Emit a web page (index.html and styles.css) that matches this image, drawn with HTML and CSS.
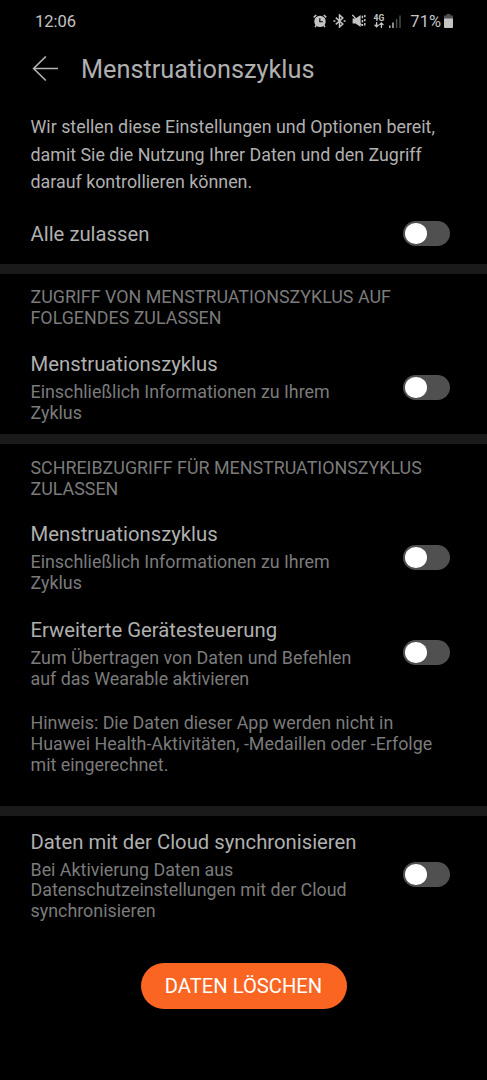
FILE: index.html
```
<!DOCTYPE html>
<html lang="de">
<head>
  <meta charset="UTF-8">
  <meta name="viewport" content="width=device-width, initial-scale=1">
  <title>Menstruationszyklus</title>
  <link rel="stylesheet" href="styles.css">
</head>
<body>
  <div class="statusbar">
    <span class="clock">12:06</span>
    <div class="status-icons">
      <svg class="icon-alarm" width="14" height="14" viewBox="0 0 14 14">
        <circle cx="7" cy="7.4" r="5.7" fill="#c4c4c4"/>
        <path d="M.7 3.4 3.3 1M13.3 3.4 10.7 1M3.2 11.3 2 13M10.8 11.3 12 13" stroke="#c4c4c4" stroke-width="1.5" fill="none"/>
        <path d="M6.8 4.2v3.6h3" stroke="#000" stroke-width="1.1" fill="none"/>
      </svg>
      <svg class="icon-bluetooth" width="13" height="14" viewBox="0 0 13 14">
        <path d="M2.8 3.6 9.8 10 6.5 13V1L9.8 4 2.8 10.4" stroke="#c4c4c4" stroke-width="1.5" fill="none"/>
        <path d="M.4 7h2M10.6 7h2" stroke="#c4c4c4" stroke-width="1.7"/>
      </svg>
      <svg class="icon-mute" width="14" height="14" viewBox="0 0 14 14">
        <path d="M.6 4.6h3L8.6 1v12L3.6 9.6h-3z" fill="#c4c4c4"/>
        <path d="M.4 1 9.8 11.4" stroke="#c4c4c4" stroke-width="1.3"/>
        <path d="M10.4 1.8v2.4M10.4 6v2.4M10.4 10v2M12.8 1v2.2M12.8 5v2.2M12.8 9v2.4" stroke="#c4c4c4" stroke-width="1.5" fill="none"/>
      </svg>
      <div class="network">
        <span>4G</span>
        <svg width="10" height="6" viewBox="0 0 10 6">
          <path d="M2.6 0v4.6M.6 2.8l2 2 2-2M7.4 6V1.2M5.4 3l2-2 2 2" stroke="#c4c4c4" stroke-width="1.3" fill="none"/>
        </svg>
      </div>
      <svg class="icon-signal" width="12" height="13" viewBox="0 0 12 13">
        <path d="M.8 10.5V13M4 7.5V13" stroke="#c4c4c4" stroke-width="1.4"/>
        <path d="M7.6 4V13M11 .5V13" stroke="#505050" stroke-width="1.4"/>
      </svg>
      <span class="percent">71%</span>
      <svg class="icon-battery" width="9" height="14" viewBox="0 0 9 14">
        <path d="M2.5 0h4v1.5H9V5H0V1.5h2.5z" fill="#505050"/>
        <path d="M0 4.5h9V13q0 1-1 1H1q-1 0-1-1z" fill="#c4c4c4"/>
      </svg>
    </div>
  </div>

  <header class="header">
    <svg width="27" height="26" viewBox="0 0 27 26">
      <path d="M13.8 .5 1.6 12.5l12.2 12M1.6 12.5H26" stroke="#b4b4b4" stroke-width="1.6" fill="none"/>
    </svg>
    <h1>Menstruationszyklus</h1>
  </header>

  <p class="intro">Wir stellen diese Einstellungen und Optionen bereit,<br>damit Sie die Nutzung Ihrer Daten und den Zugriff<br>darauf kontrollieren können.</p>

  <div class="row row-all">
    <div class="title">Alle zulassen</div>
    <div class="toggle"></div>
  </div>

  <section class="section">
    <h2>ZUGRIFF VON MENSTRUATIONSZYKLUS AUF<br>FOLGENDES ZULASSEN</h2>
    <div class="row">
      <div>
        <div class="title">Menstruationszyklus</div>
        <div class="caption">Einschließlich Informationen zu Ihrem<br>Zyklus</div>
      </div>
      <div class="toggle"></div>
    </div>
  </section>

  <section class="section">
    <h2>SCHREIBZUGRIFF FÜR MENSTRUATIONSZYKLUS<br>ZULASSEN</h2>
    <div class="row">
      <div>
        <div class="title">Menstruationszyklus</div>
        <div class="caption">Einschließlich Informationen zu Ihrem<br>Zyklus</div>
      </div>
      <div class="toggle"></div>
    </div>
    <div class="row">
      <div>
        <div class="title">Erweiterte Gerätesteuerung</div>
        <div class="caption">Zum Übertragen von Daten und Befehlen<br>auf das Wearable aktivieren</div>
      </div>
      <div class="toggle"></div>
    </div>
    <p class="note">Hinweis: Die Daten dieser App werden nicht in<br>Huawei Health-Aktivitäten, -Medaillen oder -Erfolge<br>mit eingerechnet.</p>
  </section>

  <section class="section section-cloud">
    <div class="row">
      <div>
        <div class="title">Daten mit der Cloud synchronisieren</div>
        <div class="caption">Bei Aktivierung Daten aus<br>Datenschutzeinstellungen mit der Cloud<br>synchronisieren</div>
      </div>
      <div class="toggle"></div>
    </div>
  </section>

  <button class="delete">DATEN LÖSCHEN</button>
</body>
</html>
```
FILE: styles.css
```
* {
  box-sizing: border-box;
}
body {
  margin: 0;
  height: 1080px;
  background: #000;
  color: #b0b0b0;
  font-family: Roboto, sans-serif;
  overflow: hidden;
}
h1, h2, p {
  margin: 0;
  font-weight: 400;
  white-space: nowrap;
}
.statusbar {
  height: 42px;
  padding: 0 34px 0 35px;
  display: flex;
  align-items: center;
  justify-content: space-between;
  color: #c4c4c4;
  font-size: 16.5px;
}
.status-icons {
  display: flex;
  align-items: center;
}
.icon-bluetooth {
  margin-left: 6px;
}
.icon-mute {
  margin-left: 6px;
}
.network {
  width: 11px;
  margin-left: 7px;
  font-size: 8.5px;
  font-weight: 700;
  line-height: 8px;
  display: flex;
  flex-direction: column;
  align-items: center;
}
.icon-signal {
  margin-left: 5px;
}
.percent {
  margin-left: 9px;
}
.icon-battery {
  margin-left: 3px;
}
.header {
  height: 54px;
  padding-left: 32px;
  display: flex;
  align-items: center;
  gap: 22px;
}
.header h1 {
  font-size: 25.3px;
}
.intro {
  margin-top: 17px;
  padding-left: 30.5px;
  font-size: 17.85px;
  line-height: 27.6px;
}
.row {
  padding: 0 37.5px 0 30.5px;
  display: flex;
  align-items: center;
  justify-content: space-between;
  white-space: nowrap;
}
.row-all {
  height: 68px;
  padding-top: 9px;
}
.title {
  font-size: 20.3px;
  line-height: 24px;
}
.caption {
  margin-top: 6px;
  color: #7b7b7b;
  font-size: 17.87px;
  line-height: 20.8px;
}
.toggle {
  width: 46.5px;
  height: 25px;
  margin-bottom: 1.5px;
  padding: 2px;
  border-radius: 13px;
  background: #505050;
}
.toggle::before {
  content: "";
  display: block;
  width: 21.5px;
  height: 21px;
  border-radius: 50%;
  background: #fff;
}
.section {
  border-top: 10px solid #1a1a1a;
  padding: 13.6px 0 10.6px;
}
.section h2 {
  margin-bottom: 23px;
  padding-left: 30.5px;
  color: #7b7b7b;
  font-size: 17.87px;
  line-height: 20.8px;
}
.row + .row {
  margin-top: 23.8px;
}
.note {
  margin: 23.6px 0 20px;
  padding-left: 30.5px;
  color: #7b7b7b;
  font-size: 17.87px;
  line-height: 20.8px;
}
.section-cloud {
  padding-top: 13.6px;
}
.delete {
  display: block;
  width: 206px;
  height: 46px;
  margin: 31px auto 0;
  border: none;
  border-radius: 23px;
  background: #fb6522;
  color: #fff;
  font-family: inherit;
  font-size: 20.2px;
}
```
